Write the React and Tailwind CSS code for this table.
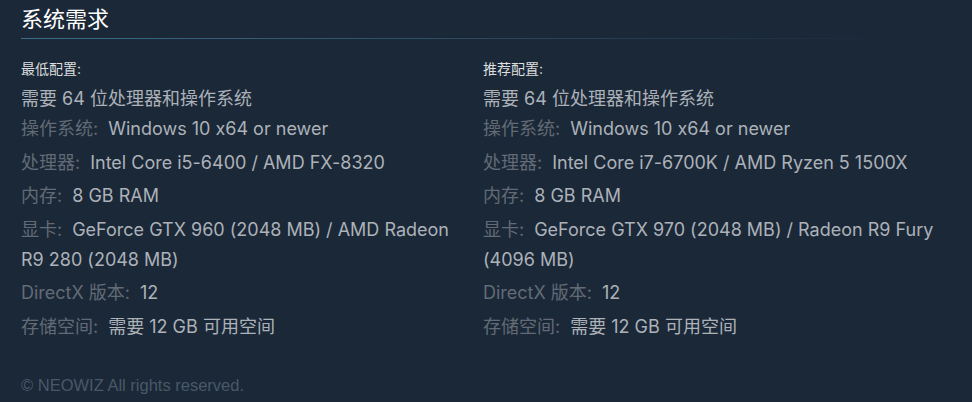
import React from "react";

const MIN_REQ = [
    { label: "操作系统:", value: "Windows 10 x64 or newer" },
    { label: "处理器:", value: "Intel Core i5-6400 / AMD FX-8320" },
    { label: "内存:", value: "8 GB RAM" },
    { label: "显卡:", value: "GeForce GTX 960 (2048 MB) / AMD Radeon R9 280 (2048 MB)" },
    { label: "DirectX 版本:", value: "12" },
    { label: "存储空间:", value: "需要 12 GB 可用空间" },
];

const REC_REQ = [
    { label: "操作系统:", value: "Windows 10 x64 or newer" },
    { label: "处理器:", value: "Intel Core i7-6700K / AMD Ryzen 5 1500X" },
    { label: "内存:", value: "8 GB RAM" },
    { label: "显卡:", value: "GeForce GTX 970 (2048 MB) / Radeon R9 Fury (4096 MB)" },
    { label: "DirectX 版本:", value: "12" },
    { label: "存储空间:", value: "需要 12 GB 可用空间" },
];

const ReqColumn = ({ title, items }) => (
    <div className="pr-4">
        <div className="text-[14px] leading-[18px] text-[#dcdedf]">{title}</div>
        <ul className="mt-[6px] text-[18px] leading-[30px] text-[#acb2b8]">
            <li>需要 64 位处理器和操作系统</li>
            {items.map((item, i) => (
                <li key={item.label} className={i === 0 ? "" : "mt-[3.5px]"}>
                    <span className="text-[#626b75] mr-[10px]">{item.label}</span>
                    {item.value}
                </li>
            ))}
        </ul>
    </div>
);

export default function App() {
    return (
        <div
            className="w-[972px] h-[402px] bg-[#1b2838] px-[21px] pt-[4px] overflow-hidden"
            style={{ fontFamily: 'Inter, "Noto Sans CJK SC", sans-serif', fontFeatureSettings: '"calt" 0' }}
        >
            <h2 className="text-[22px] leading-[30px] text-white">系统需求</h2>
            <div className="mt-[4px] h-px w-[870px] bg-gradient-to-r from-[#3b6e8c] to-[#3b6e8c00]" />
            <div className="mt-[21px] grid grid-cols-[462px_1fr]">
                <ReqColumn title="最低配置:" items={MIN_REQ} />
                <ReqColumn title="推荐配置:" items={REC_REQ} />
            </div>
            <p className="mt-[33px] text-[16.5px] leading-[20px] text-[#4a5866] font-['Liberation_Sans',Arial,sans-serif]">
                © NEOWIZ All rights reserved.
            </p>
        </div>
    );
}
